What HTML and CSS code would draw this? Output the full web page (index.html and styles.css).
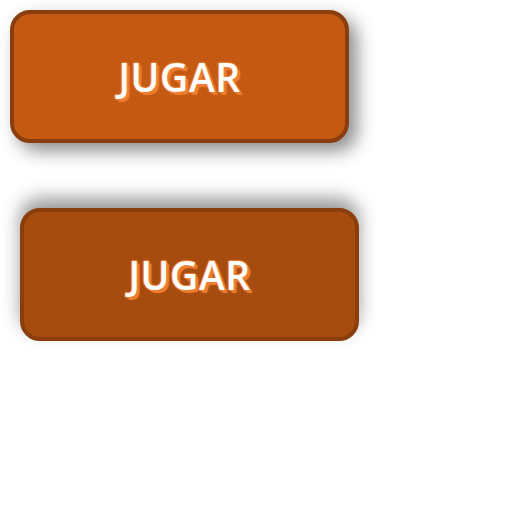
FILE: index.html
```html
<!DOCTYPE html>
<html>
<head>
<meta charset="utf-8">
<link rel="stylesheet" href="styles.css">
</head>
<body>
<div class="stack">
  <button class="btn">JUGAR</button>
  <button class="btn btn-pressed">JUGAR</button>
</div>
</body>
</html>
```

FILE: styles.css
```css
html, body { margin: 0; padding: 0; background: #fff; }
.stack {
  display: flex;
  flex-direction: column;
  align-items: flex-start;
  gap: 65px;
  padding: 10px;
}
.btn {
  box-sizing: border-box;
  width: 339px;
  height: 133px;
  border: 4px solid #8a3e0d;
  border-radius: 20px;
  background: #c45a12;
  color: #fff;
  font-family: "Open Sans", "DejaVu Sans", sans-serif;
  font-weight: 600;
  font-size: 39px;
  letter-spacing: 0.5px;
  line-height: 1;
  padding: 0;
  box-shadow: 8px 8px 18px rgba(0,0,0,0.45);
  text-shadow: 1px 0 1px #ef7e32, -1px 0 1px #ef7e32, 0 -1px 1px #ef7e32, 0 1px 1px #ef7e32, 2px 2px 1px #ef7e32, 3px 3px 1px #ef7e32;
}
.btn-pressed {
  margin-left: 10px;
  background: #a64c0f;
  box-shadow: 0 -10px 18px rgba(0,0,0,0.4);
}
```
